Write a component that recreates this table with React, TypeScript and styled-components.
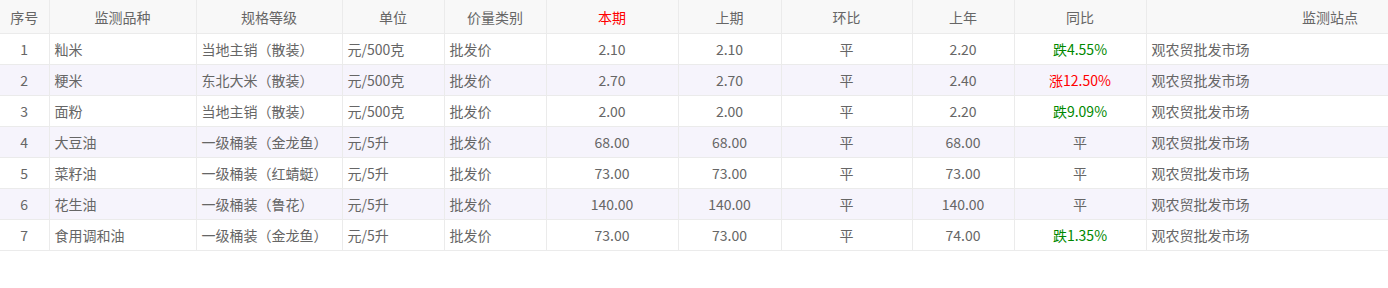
import styled, { createGlobalStyle } from "styled-components";

const GlobalStyle = createGlobalStyle`
    body {
        margin: 0;
        background: #fff;
        font-family: "Noto Sans CJK SC", "Noto Sans", sans-serif;
    }
`;

type Trend = "up" | "down" | "flat";

interface PriceRow {
    name: string;
    spec: string;
    unit: string;
    kind: string;
    current: string;
    previous: string;
    mom: string;
    lastYear: string;
    yoy: string;
    trend: Trend;
    station: string;
}

const rows: PriceRow[] = [
    { name: "籼米", spec: "当地主销（散装）", unit: "元/500克", kind: "批发价", current: "2.10", previous: "2.10", mom: "平", lastYear: "2.20", yoy: "跌4.55%", trend: "down", station: "观农贸批发市场" },
    { name: "粳米", spec: "东北大米（散装）", unit: "元/500克", kind: "批发价", current: "2.70", previous: "2.70", mom: "平", lastYear: "2.40", yoy: "涨12.50%", trend: "up", station: "观农贸批发市场" },
    { name: "面粉", spec: "当地主销（散装）", unit: "元/500克", kind: "批发价", current: "2.00", previous: "2.00", mom: "平", lastYear: "2.20", yoy: "跌9.09%", trend: "down", station: "观农贸批发市场" },
    { name: "大豆油", spec: "一级桶装（金龙鱼）", unit: "元/5升", kind: "批发价", current: "68.00", previous: "68.00", mom: "平", lastYear: "68.00", yoy: "平", trend: "flat", station: "观农贸批发市场" },
    { name: "菜籽油", spec: "一级桶装（红蜻蜓）", unit: "元/5升", kind: "批发价", current: "73.00", previous: "73.00", mom: "平", lastYear: "73.00", yoy: "平", trend: "flat", station: "观农贸批发市场" },
    { name: "花生油", spec: "一级桶装（鲁花）", unit: "元/5升", kind: "批发价", current: "140.00", previous: "140.00", mom: "平", lastYear: "140.00", yoy: "平", trend: "flat", station: "观农贸批发市场" },
    { name: "食用调和油", spec: "一级桶装（金龙鱼）", unit: "元/5升", kind: "批发价", current: "73.00", previous: "73.00", mom: "平", lastYear: "74.00", yoy: "跌1.35%", trend: "down", station: "观农贸批发市场" },
];

const colWidths = [49, 147, 146, 102, 102, 132, 103, 131, 102, 132, 242];

const Table = styled.table`
    width: 1388px;
    border-collapse: collapse;
    table-layout: fixed;
    font-size: 14px;
    color: #666;
`;

const HeadCell = styled.th<{ $red?: boolean; $alignRight?: boolean }>`
    height: 33px;
    padding: 0 ${(p) => (p.$alignRight ? "30px" : "5px")} 0 5px;
    background: #f8f8f8;
    font-weight: normal;
    text-align: ${(p) => (p.$alignRight ? "right" : "center")};
    color: ${(p) => (p.$red ? "#f00" : "#666")};
    border-bottom: 1px solid #ebebeb;
    border-right: 1px solid #ebebeb;
    &:last-child {
        border-right: none;
    }
`;

const BodyRow = styled.tr<{ $even: boolean }>`
    background: ${(p) => (p.$even ? "#f6f4fc" : "#fff")};
`;

const Cell = styled.td<{ $center?: boolean; $trend?: Trend }>`
    height: 30px;
    padding: 0 5px;
    text-align: ${(p) => (p.$center ? "center" : "left")};
    white-space: nowrap;
    color: ${(p) =>
        p.$trend === "up" ? "#f00" : p.$trend === "down" ? "#080" : "#666"};
    border-bottom: 1px solid #ebebeb;
    border-right: 1px solid #ebebeb;
    &:last-child {
        border-right: none;
    }
`;

const App = () => {
    return (
        <>
            <GlobalStyle />
            <Table>
                <colgroup>
                    {colWidths.map((w, i) => (
                        <col key={i} style={{ width: w }} />
                    ))}
                </colgroup>
                <thead>
                    <tr>
                        <HeadCell>序号</HeadCell>
                        <HeadCell>监测品种</HeadCell>
                        <HeadCell>规格等级</HeadCell>
                        <HeadCell>单位</HeadCell>
                        <HeadCell>价量类别</HeadCell>
                        <HeadCell $red>本期</HeadCell>
                        <HeadCell>上期</HeadCell>
                        <HeadCell>环比</HeadCell>
                        <HeadCell>上年</HeadCell>
                        <HeadCell>同比</HeadCell>
                        <HeadCell $alignRight>监测站点</HeadCell>
                    </tr>
                </thead>
                <tbody>
                    {rows.map((r, i) => (
                        <BodyRow key={r.name} $even={i % 2 === 1}>
                            <Cell $center>{i + 1}</Cell>
                            <Cell>{r.name}</Cell>
                            <Cell>{r.spec}</Cell>
                            <Cell>{r.unit}</Cell>
                            <Cell>{r.kind}</Cell>
                            <Cell $center>{r.current}</Cell>
                            <Cell $center>{r.previous}</Cell>
                            <Cell $center>{r.mom}</Cell>
                            <Cell $center>{r.lastYear}</Cell>
                            <Cell $center $trend={r.trend}>
                                {r.yoy}
                            </Cell>
                            <Cell>{r.station}</Cell>
                        </BodyRow>
                    ))}
                </tbody>
            </Table>
        </>
    );
};

export default App;
